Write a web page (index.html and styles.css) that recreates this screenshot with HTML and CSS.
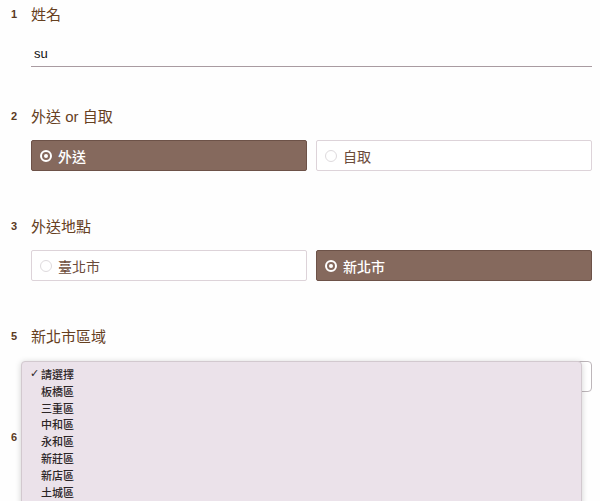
FILE: index.html
```html
<!DOCTYPE html>
<html lang="zh-Hant">
<head>
<meta charset="utf-8">
<title>訂購表單</title>
<link rel="stylesheet" href="styles.css">
</head>
<body>
<form class="form">
  <div class="question q-input">
    <div class="qnum">1</div>
    <div class="qbody">
      <div class="qtitle">姓名</div>
      <div class="text-input">su</div>
    </div>
  </div>

  <div class="question">
    <div class="qnum">2</div>
    <div class="qbody">
      <div class="qtitle">外送 or 自取</div>
      <div class="choices">
        <div class="choice selected"><span class="radio"></span>外送</div>
        <div class="choice"><span class="radio"></span>自取</div>
      </div>
    </div>
  </div>

  <div class="question">
    <div class="qnum">3</div>
    <div class="qbody">
      <div class="qtitle">外送地點</div>
      <div class="choices">
        <div class="choice"><span class="radio"></span>臺北市</div>
        <div class="choice selected"><span class="radio"></span>新北市</div>
      </div>
    </div>
  </div>

  <div class="question q-select">
    <div class="qnum">5</div>
    <div class="qbody">
      <div class="qtitle">新北市區域</div>
      <div class="select-wrap">
        <div class="select-box"></div>
        <ul class="dropdown">
          <li class="opt checked"><span class="check">✓</span>請選擇</li>
          <li class="opt">板橋區</li>
          <li class="opt">三重區</li>
          <li class="opt">中和區</li>
          <li class="opt">永和區</li>
          <li class="opt">新莊區</li>
          <li class="opt">新店區</li>
          <li class="opt">土城區</li>
        </ul>
      </div>
    </div>
  </div>

  <div class="question">
    <div class="qnum">6</div>
    <div class="qbody">
      <div class="qtitle">&nbsp;</div>
    </div>
  </div>
</form>
</body>
</html>
```
FILE: styles.css
```css
* { box-sizing: border-box; }
html, body { margin: 0; padding: 0; }
body {
  background: #fefefe;
  font-family: "Liberation Sans", "Noto Sans CJK TC", sans-serif;
  width: 600px;
  height: 501px;
  overflow: hidden;
}
.form {
  display: flex;
  flex-direction: column;
  padding: 5px 8px 0 0;
}
.question {
  display: flex;
  margin-bottom: 46px;
}
.question.q-input { margin-bottom: 40px; }
.question.q-select { margin-bottom: 36px; }
.qnum {
  width: 31px;
  padding-left: 11px;
  font-size: 11px;
  font-weight: bold;
  color: #5b3a1f;
  line-height: 20px;
  margin-top: -1px;
}
.qbody {
  flex: 1;
  display: flex;
  flex-direction: column;
}
.qtitle {
  font-size: 15px;
  line-height: 20px;
  color: #66401f;
  margin-bottom: 14px;
}
.text-input {
  height: 28px;
  border-bottom: 1px solid #a99ba1;
  font-size: 13px;
  color: #111;
  padding-left: 3px;
  line-height: 28px;
  padding-top: 1px;
}
.choices {
  display: grid;
  grid-template-columns: 1fr 1fr;
  gap: 9px;
  margin-top: -1px;
}
.choice {
  height: 31px;
  border: 1px solid #ddd3d9;
  border-radius: 2px;
  background: #fff;
  display: flex;
  align-items: center;
  padding-left: 8px;
  font-family: "Noto Sans CJK TC", sans-serif;
  font-size: 14px;
  color: #6b4b3a;
  gap: 6px;
}
.choice .radio {
  width: 12px;
  height: 12px;
  border-radius: 50%;
  border: 1px solid #dedadd;
  background: #fff;
  flex: none;
}
.choice.selected {
  background: #85695d;
  border-color: #6d5248;
  color: #fff;
  font-weight: 500;
}
.choice.selected .radio {
  border: 2px solid #fff;
  background: #85695d;
  position: relative;
}
.choice.selected .radio::after {
  content: "";
  position: absolute;
  left: 2px;
  top: 2px;
  width: 4px;
  height: 4px;
  border-radius: 50%;
  background: #fff;
}
.select-wrap {
  position: relative;
  height: 31px;
}
.select-box {
  height: 31px;
  border: 1px solid #bdb6ba;
  border-radius: 2px 4px 4px 2px;
  background: #fff;
}
.dropdown {
  position: absolute;
  left: -10px;
  top: 0;
  width: 561px;
  margin: 0;
  padding: 4px 0 0 0;
  list-style: none;
  background: #ebe2ea;
  border: 1px solid #d2c9cf;
  border-radius: 4px 4px 0 0;
  box-shadow: 0 1px 6px rgba(0,0,0,0.18);
  height: 150px;
}
.opt {
  position: relative;
  font-family: "Noto Sans CJK TC", sans-serif;
  font-size: 11px;
  line-height: 16.8px;
  height: 16.8px;
  padding-left: 19px;
  color: #2b2527;
  font-weight: 500;
}
.opt .check {
  position: absolute;
  left: 8px;
  top: 0;
  font-family: "DejaVu Sans", sans-serif;
  font-size: 11px;
  font-weight: bold;
}
```
